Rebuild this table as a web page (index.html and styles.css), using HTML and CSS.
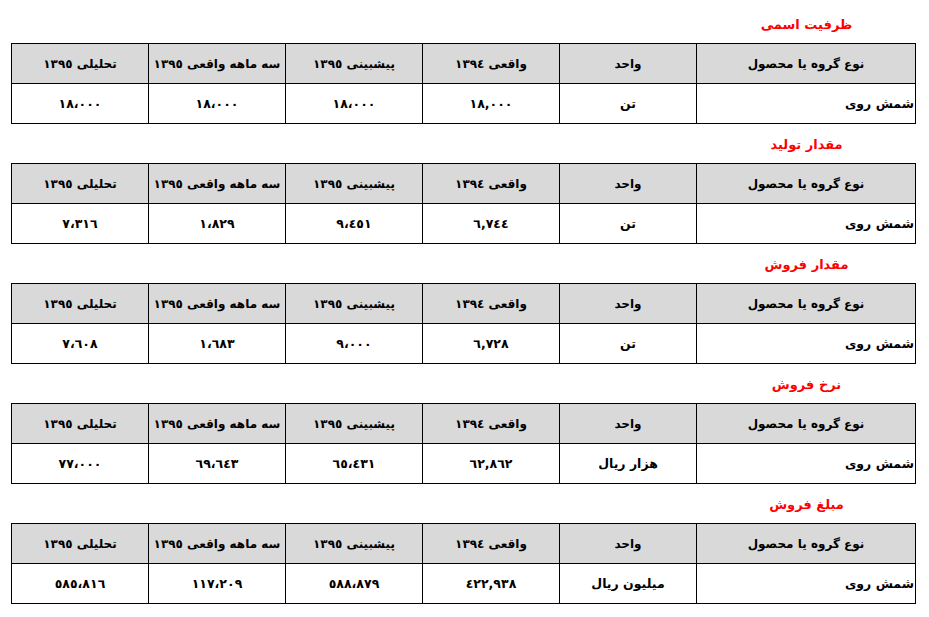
FILE: index.html
```html
<!DOCTYPE html>
<html lang="fa" dir="rtl">
<head>
<meta charset="utf-8">
<title>جدول</title>
<link rel="stylesheet" href="styles.css">
</head>
<body>
<div class="page">

  <section class="block">
    <div class="caption"><span class="caption-text">ظرفیت اسمی</span></div>
    <table class="grid">
      <colgroup><col class="c-first"><col><col><col><col><col></colgroup>
      <tr class="head"><td>نوع گروه یا محصول</td><td>واحد</td><td>واقعی ١٣٩٤</td><td>پیشبینی ١٣٩٥</td><td>سه ماهه واقعی ١٣٩٥</td><td>تحلیلی ١٣٩٥</td></tr>
      <tr class="data"><td class="name">شمش روی</td><td>تن</td><td>١٨,٠٠٠</td><td>١٨،٠٠٠</td><td>١٨،٠٠٠</td><td>١٨،٠٠٠</td></tr>
    </table>
  </section>

  <section class="block">
    <div class="caption"><span class="caption-text">مقدار تولید</span></div>
    <table class="grid">
      <colgroup><col class="c-first"><col><col><col><col><col></colgroup>
      <tr class="head"><td>نوع گروه یا محصول</td><td>واحد</td><td>واقعی ١٣٩٤</td><td>پیشبینی ١٣٩٥</td><td>سه ماهه واقعی ١٣٩٥</td><td>تحلیلی ١٣٩٥</td></tr>
      <tr class="data"><td class="name">شمش روی</td><td>تن</td><td>٦,٧٤٤</td><td>٩،٤٥١</td><td>١،٨٢٩</td><td>٧،٣١٦</td></tr>
    </table>
  </section>

  <section class="block">
    <div class="caption"><span class="caption-text">مقدار فروش</span></div>
    <table class="grid">
      <colgroup><col class="c-first"><col><col><col><col><col></colgroup>
      <tr class="head"><td>نوع گروه یا محصول</td><td>واحد</td><td>واقعی ١٣٩٤</td><td>پیشبینی ١٣٩٥</td><td>سه ماهه واقعی ١٣٩٥</td><td>تحلیلی ١٣٩٥</td></tr>
      <tr class="data"><td class="name">شمش روی</td><td>تن</td><td>٦,٧٢٨</td><td>٩،٠٠٠</td><td>١،٦٨٣</td><td>٧،٦٠٨</td></tr>
    </table>
  </section>

  <section class="block">
    <div class="caption"><span class="caption-text">نرخ فروش</span></div>
    <table class="grid">
      <colgroup><col class="c-first"><col><col><col><col><col></colgroup>
      <tr class="head"><td>نوع گروه یا محصول</td><td>واحد</td><td>واقعی ١٣٩٤</td><td>پیشبینی ١٣٩٥</td><td>سه ماهه واقعی ١٣٩٥</td><td>تحلیلی ١٣٩٥</td></tr>
      <tr class="data"><td class="name">شمش روی</td><td>هزار ریال</td><td>٦٢,٨٦٢</td><td>٦٥،٤٣١</td><td>٦٩،٦٤٣</td><td>٧٧،٠٠٠</td></tr>
    </table>
  </section>

  <section class="block">
    <div class="caption"><span class="caption-text">مبلغ فروش</span></div>
    <table class="grid">
      <colgroup><col class="c-first"><col><col><col><col><col></colgroup>
      <tr class="head"><td>نوع گروه یا محصول</td><td>واحد</td><td>واقعی ١٣٩٤</td><td>پیشبینی ١٣٩٥</td><td>سه ماهه واقعی ١٣٩٥</td><td>تحلیلی ١٣٩٥</td></tr>
      <tr class="data"><td class="name">شمش روی</td><td>میلیون ریال</td><td>٤٢٢,٩٣٨</td><td>٥٨٨،٨٧٩</td><td>١١٧،٢٠٩</td><td>٥٨٥،٨١٦</td></tr>
    </table>
  </section>

</div>
</body>
</html>
```

FILE: styles.css
```css
html, body {
  margin: 0;
  padding: 0;
  background: #ffffff;
}

body {
  font-family: Tahoma, "DejaVu Sans", "Noto Sans", sans-serif;
  font-weight: bold;
  font-size: 12px;
  color: #000000;
}

.page {
  padding: 4px 13px 0 11px;
  width: 905px;
}

.block {
  display: flex;
  flex-direction: column;
}

.caption {
  height: 39px;
  display: flex;
  align-items: center;
  padding-top: 2px;
  box-sizing: border-box;
}

.caption-text {
  width: 219px;
  text-align: center;
  color: #ff0000;
  font-size: 13px;
}

.grid {
  width: 905px;
  border-collapse: collapse;
  table-layout: fixed;
}

.c-first {
  width: 219px;
}

.grid td {
  border: 1px solid #000000;
  height: 39px;
  padding: 0;
  text-align: center;
  vertical-align: middle;
  white-space: nowrap;
}

.head td {
  background: #d9d9d9;
}

.data td {
  font-size: 12.5px;
}

.data td.name {
  text-align: right;
  padding-right: 1px;
}
```
